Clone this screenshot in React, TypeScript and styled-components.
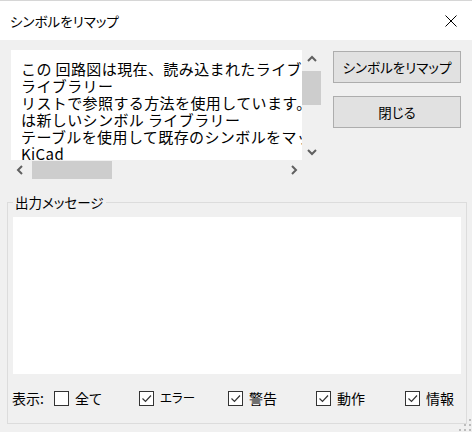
import React from 'react';
import styled, { createGlobalStyle } from 'styled-components';

const GlobalStyle = createGlobalStyle`
  html, body {
    margin: 0;
    padding: 0;
    background: #f0f0f0;
  }
  body {
    font-family: "Noto Sans CJK JP", "Noto Sans", sans-serif;
    font-size: 15px;
    color: #000;
    font-feature-settings: "palt";
  }
`;

const Window = styled.div`
  position: relative;
  width: 472px;
  height: 432px;
  overflow: hidden;
  background: #f0f0f0;
  display: flex;
  flex-direction: column;
`;

const TitleBar = styled.div`
  height: 39px;
  flex: none;
  background: #ffffff;
  border-top: 1px solid #d6d6d6;
  display: flex;
  align-items: center;
  justify-content: space-between;
  padding: 0 15px 0 10px;
`;

const Title = styled.span`
  font-size: 13.5px;
  line-height: 16px;
`;

const Body = styled.div`
  padding: 10px 5px 0 7px;
  display: flex;
  flex-direction: column;
`;

const TopRow = styled.div`
  display: flex;
  gap: 12px;
  padding-left: 4px;
`;

const ScrollView = styled.div`
  display: grid;
  grid-template-columns: 291px 19px;
  grid-template-rows: 110px 19px;
`;

const TextPane = styled.div`
  background: #ffffff;
  overflow: hidden;
  white-space: pre;
  padding: 10px 0 0 10px;
  line-height: 17px;
  letter-spacing: 0.4px;
  font-feature-settings: normal;
`;

const VBar = styled.div`
  display: flex;
  flex-direction: column;
  background: #f0f0f0;
`;

const HBar = styled.div`
  display: flex;
  background: #f0f0f0;
`;

const Arrow = styled.div<{ $vertical?: boolean }>`
  flex: none;
  width: ${(p) => (p.$vertical ? '19px' : '17px')};
  height: ${(p) => (p.$vertical ? '17px' : '19px')};
  display: flex;
  align-items: center;
  justify-content: center;
`;

const Track = styled.div<{ $vertical?: boolean }>`
  flex: 1;
  display: flex;
  flex-direction: ${(p) => (p.$vertical ? 'column' : 'row')};
`;

const Thumb = styled.div<{ $vertical?: boolean; $size: number; $offset: number }>`
  background: #cdcdcd;
  ${(p) =>
    p.$vertical
      ? `height: ${p.$size}px; margin-top: ${p.$offset}px; width: 19px;`
      : `width: ${p.$size}px; margin-left: ${p.$offset}px; height: 18px; margin-top: 1px;`}
`;

const Corner = styled.div`
  background: #f0f0f0;
`;

const ButtonColumn = styled.div`
  width: 128px;
  display: flex;
  flex-direction: column;
  gap: 13px;
  padding-top: 1px;
`;

const Button = styled.button`
  height: 32px;
  border: 1px solid #adadad;
  background: #e1e1e1;
  font-family: inherit;
  font-size: 13.5px;
  font-feature-settings: "palt";
  color: #000;
  padding: 0;
`;

const Group = styled.fieldset`
  margin: 15px 0 0;
  padding: 0;
  border: 1px solid #dcdcdc;
  min-width: 0;
  display: flex;
  flex-direction: column;
`;

const Legend = styled.legend`
  margin-left: 5px;
  padding: 0 2px;
  line-height: 16px;
  font-size: 13.5px;
`;

const MessageBox = styled.div`
  margin: 7px 5px 0 5px;
  height: 157px;
  background: #ffffff;
`;

const FilterRow = styled.div`
  display: grid;
  grid-template-columns: 42px 85px 89px 88px 89px auto;
  align-items: center;
  height: 20px;
  margin: 14px 11px 15px 4px;
`;

const FilterLabel = styled.span`
  font-size: 14px;
`;

const CheckItem = styled.label<{ $small?: boolean }>`
  display: flex;
  align-items: center;
  gap: 6px;
  line-height: 16px;
  font-size: ${(p) => (p.$small ? '12.5px' : '14px')};
`;

const Box = styled.span`
  width: 13px;
  height: 13px;
  flex: none;
  border: 1px solid #333333;
  background: #ffffff;
  display: flex;
  align-items: center;
  justify-content: center;
`;

const Grip = styled.svg`
  position: absolute;
  right: 1px;
  bottom: 1px;
`;

const Chevron = ({ dir }: { dir: 'up' | 'down' | 'left' | 'right' }) => {
  const pts = {
    up: '1,6 5,2 9,6',
    down: '1,2 5,6 9,2',
    left: '6,1 2,5 6,9',
    right: '2,1 6,5 2,9',
  }[dir];
  const vert = dir === 'up' || dir === 'down';
  return (
    <svg width={vert ? 10 : 8} height={vert ? 8 : 10}>
      <polyline points={pts} fill="none" stroke="#606060" strokeWidth="2" />
    </svg>
  );
};

const Check = ({ label, checked, small }: { label: string; checked?: boolean; small?: boolean }) => (
  <CheckItem $small={small}>
    <Box>
      {checked && (
        <svg width="11" height="11">
          <polyline points="1.5,5.5 4.5,8.5 10,2.5" fill="none" stroke="#333" strokeWidth="1.2" />
        </svg>
      )}
    </Box>
    {label}
  </CheckItem>
);

// lines are clipped by the pane, only the visible part is kept
const lines = [
  'この 回路図は現在、読み込まれたライブラ',
  'ライブラリー',
  'リストで参照する方法を使用しています。',
  'は新しいシンボル ライブラリー',
  'テーブルを使用して既存のシンボルをマッ',
  'KiCad',
];

export default function App() {
  return (
    <>
      <GlobalStyle />
      <Window>
        <TitleBar>
          <Title>シンボルをリマップ</Title>
          <svg width="12" height="12">
            <path d="M0.5 0.5 L11.5 11.5 M11.5 0.5 L0.5 11.5" stroke="#000" strokeWidth="1" />
          </svg>
        </TitleBar>
        <Body>
          <TopRow>
            <ScrollView>
              <TextPane>{lines.join('\n')}</TextPane>
              <VBar>
                <Arrow $vertical>
                  <Chevron dir="up" />
                </Arrow>
                <Track $vertical>
                  <Thumb $vertical $size={34} $offset={4} />
                </Track>
                <Arrow $vertical>
                  <Chevron dir="down" />
                </Arrow>
              </VBar>
              <HBar>
                <Arrow>
                  <Chevron dir="left" />
                </Arrow>
                <Track>
                  <Thumb $size={80} $offset={4} />
                </Track>
                <Arrow>
                  <Chevron dir="right" />
                </Arrow>
              </HBar>
              <Corner />
            </ScrollView>
            <ButtonColumn>
              <Button>シンボルをリマップ</Button>
              <Button>閉じる</Button>
            </ButtonColumn>
          </TopRow>
          <Group>
            <Legend>出力メッセージ</Legend>
            <MessageBox />
            <FilterRow>
              <FilterLabel>表示:</FilterLabel>
              <Check label="全て" />
              <Check label="エラー" checked small />
              <Check label="警告" checked />
              <Check label="動作" checked />
              <Check label="情報" checked />
            </FilterRow>
          </Group>
        </Body>
        <Grip width="12" height="12">
          <g fill="#bcbcbc">
            <rect x="10" y="0" width="2" height="2" />
            <rect x="10" y="5" width="2" height="2" />
            <rect x="5" y="5" width="2" height="2" />
            <rect x="10" y="10" width="2" height="2" />
            <rect x="5" y="10" width="2" height="2" />
            <rect x="0" y="10" width="2" height="2" />
          </g>
        </Grip>
      </Window>
    </>
  );
}
